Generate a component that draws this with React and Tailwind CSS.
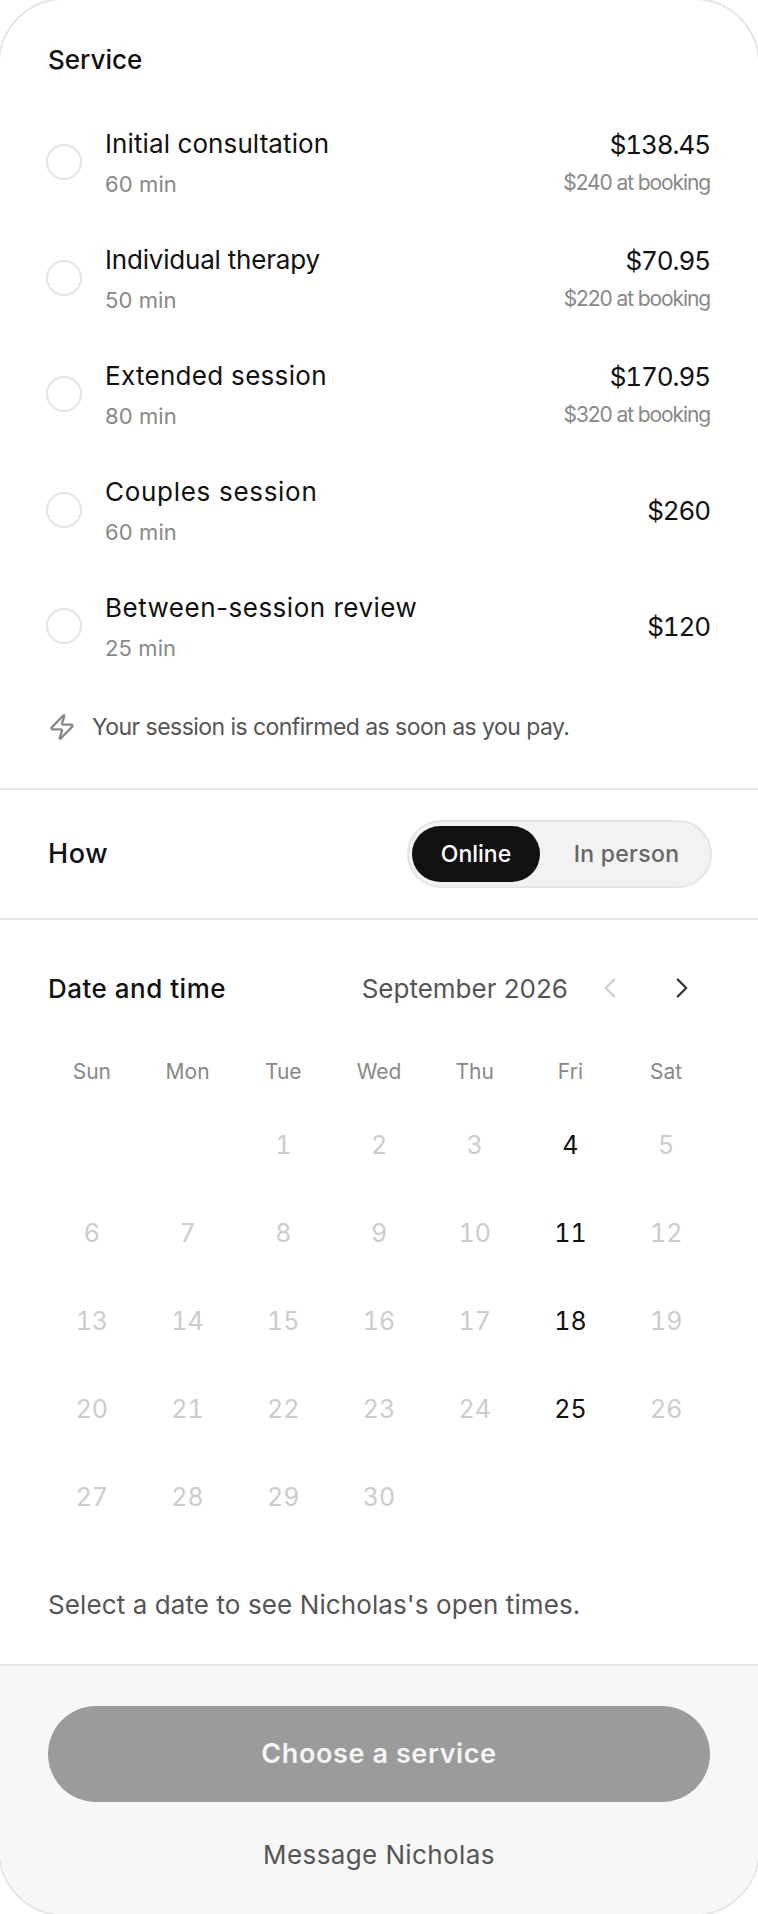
import React from "react";

const services = [
  { t: "Initial consultation", tr: "tracking-[0.1px]", d: "60 min", p: "$138.45", s: "$240 at booking" },
  { t: "Individual therapy", tr: "tracking-[-0.2px]", d: "50 min", p: "$70.95", s: "$220 at booking" },
  { t: "Extended session", tr: "tracking-[0.3px]", d: "80 min", p: "$170.95", s: "$320 at booking" },
  { t: "Couples session", tr: "tracking-[0.7px]", d: "60 min", p: "$260" },
  { t: "Between-session review", tr: "tracking-[0.5px]", d: "25 min", p: "$120" },
];
const days = ["Sun", "Mon", "Tue", "Wed", "Thu", "Fri", "Sat"];
const cells = [null, null, ...Array.from({ length: 30 }, (_, i) => i + 1)];
const open = [4, 11, 18, 25];

export default function App() {
  return (
    <div className="w-[758px] h-[1914px] overflow-hidden font-['Inter',sans-serif] text-[#111]">
      <div className="w-[762px] h-[1918px] ml-[-2px] mt-[-2px] bg-white rounded-[66px] border-2 border-[#e5e5e5] overflow-hidden flex flex-col">
        <section className="px-[48px] pt-[42px]">
          <h2 className="text-[26px] leading-[36px] font-medium">Service</h2>
          <div className="mt-[27px] flex flex-col">
            {services.map((s) => (
              <div key={s.t} className="h-[116px] flex items-center">
                <span className="w-[36px] h-[36px] rounded-full border-2 border-[#e5e5e5] ml-[-2px] mt-[-2px] shrink-0" />
                <div className="ml-[23px] flex-1">
                  <div className={`text-[26px] leading-[36px] ${s.tr}`}>{s.t}</div>
                  <div className="text-[22px] leading-[32px] mt-[6px] text-[#888] tracking-[0.1px]">{s.d}</div>
                </div>
                <div className="text-right mt-[-1px]">
                  <div className="text-[26px] leading-[36px] tabular-nums tracking-[-1.1px]">{s.p}</div>
                  {s.s && <div className="text-[21px] leading-[30px] mt-[5px] text-[#888] tracking-[-1.1px]">{s.s}</div>}
                </div>
              </div>
            ))}
          </div>
          <div className="mt-[24px] flex items-center gap-[16px] h-[36px]">
            <svg width="28" height="28" viewBox="0 0 24 24" fill="none" stroke="#888" strokeWidth="2" strokeLinecap="round" strokeLinejoin="round">
              <path d="M4 14a1 1 0 0 1-.78-1.63l9.9-10.2a.5.5 0 0 1 .86.46l-1.92 6.02A1 1 0 0 0 13 10h7a1 1 0 0 1 .78 1.63l-9.9 10.2a.5.5 0 0 1-.86-.46l1.92-6.02A1 1 0 0 0 11 14z" />
            </svg>
            <span className="text-[23px] text-[#555] tracking-[-0.55px]">Your session is confirmed as soon as you pay.</span>
          </div>
        </section>

        <div className="mt-[43px] border-t-2 border-[#e5e5e5] h-[130px] px-[48px] flex items-center justify-between">
          <span className="text-[27px] font-medium tracking-[0.7px]">How</span>
          <div className="w-[305px] h-[68px] rounded-full border-2 border-[#e5e5e5] bg-[#f2f2f2] pl-[3px] py-[4px] flex items-center mr-[-2px]">
            <span className="w-[128px] h-[56px] rounded-full bg-[#111] text-white text-[23px] font-medium flex items-center justify-center">Online</span>
            <span className="flex-1 pl-[3px] text-[23px] font-medium text-[#666] text-center tracking-[0.3px]">In person</span>
          </div>
        </div>

        <section className="border-t-2 border-[#e5e5e5] flex-1 flex flex-col">
          <div className="px-[48px] mt-[45px] h-[46px] flex items-center">
            <span className="text-[26px] font-medium tracking-[0.5px]">Date and time</span>
            <span className="ml-auto text-[26px] text-[#555]">September 2026</span>
            <svg className="ml-[25px]" width="34" height="34" viewBox="0 0 24 24" fill="none" stroke="#ccc" strokeWidth="1.6" strokeLinecap="round" strokeLinejoin="round"><path d="m15 18-6-6 6-6" /></svg>
            <svg className="ml-[38px] mr-[11px]" width="34" height="34" viewBox="0 0 24 24" fill="none" stroke="#333" strokeWidth="1.6" strokeLinecap="round" strokeLinejoin="round"><path d="m9 18 6-6-6-6" /></svg>
          </div>
          <div className="mt-[41px] px-[44px] grid grid-cols-7">
            {days.map((d) => (
              <div key={d} className="h-[40px] flex items-center justify-center text-[21px] text-[#888]">{d}</div>
            ))}
          </div>
          <div className="mt-[10px] px-[44px] grid grid-cols-7 auto-rows-[88px]">
            {cells.map((c, i) => (
              <div key={i} className={`flex items-center justify-center text-[25px] tabular-nums ${open.includes(c) ? "text-[#111]" : "text-[#ccc]"}`}>{c}</div>
            ))}
          </div>
          <p className="px-[48px] mt-[45px] text-[26px] leading-[36px] text-[#555] tracking-[0.1px]">Select a date to see Nicholas's open times.</p>
        </section>

        <footer className="border-t-2 border-[#e5e5e5] bg-[#f7f7f7] h-[250px] px-[48px] pt-[40px]">
          <div className="h-[96px] rounded-full bg-[#9b9b9b] flex items-center justify-center text-[#f5f5f5] text-[27px] font-semibold tracking-[0.6px]">Choose a service</div>
          <div className="mt-[35px] text-center text-[26px] leading-[36px] text-[#555] tracking-[0.4px]">Message Nicholas</div>
        </footer>
      </div>
    </div>
  );
}
